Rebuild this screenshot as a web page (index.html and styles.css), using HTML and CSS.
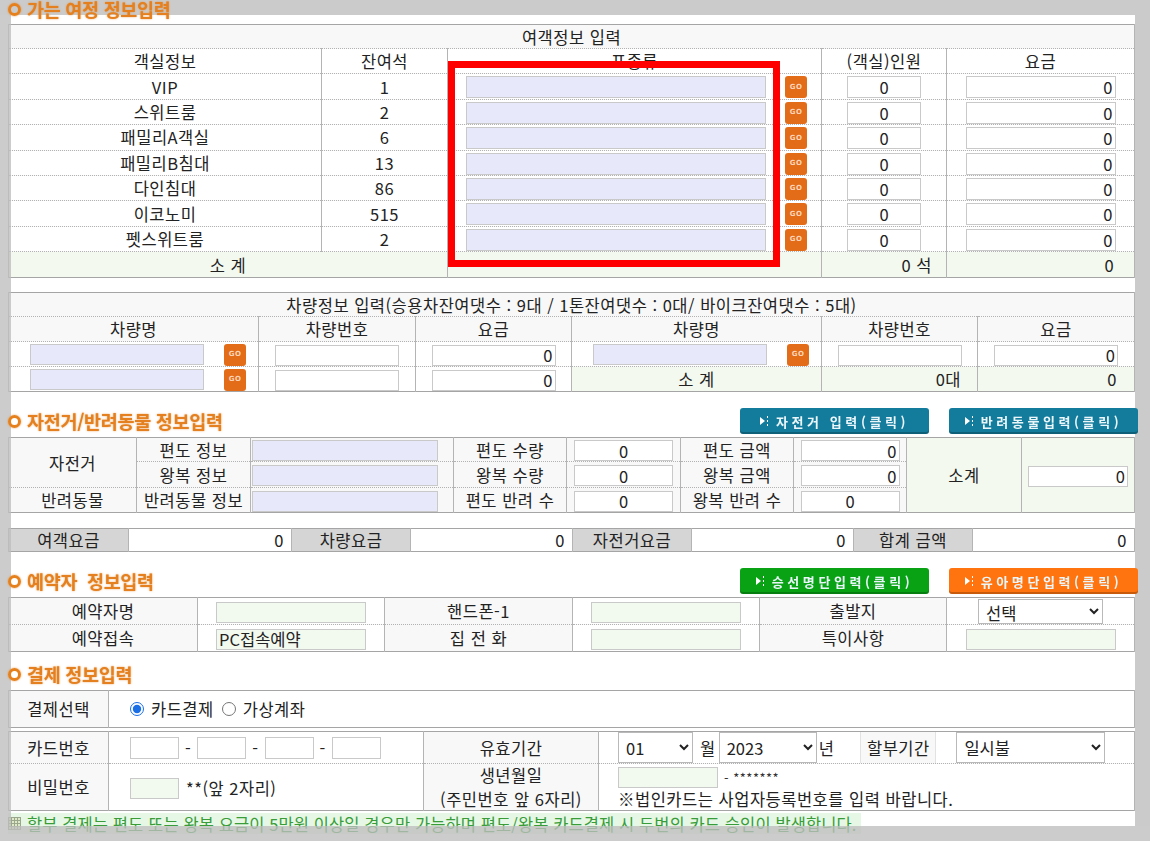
FILE: index.html
```html
<!DOCTYPE html>
<html lang="ko">
<head>
<meta charset="utf-8">
<title>여정 정보입력</title>
<link rel="stylesheet" href="styles.css">
</head>
<body>
<div class="frame frame-top"></div>
<div class="frame frame-left"></div>
<div class="frame frame-right"></div>
<div class="frame frame-bottom"></div>

<main class="page">
  <div class="sec-head first">
    <h2 class="sec-title"><span class="ring"></span>가는 여정 정보입력</h2>
  </div>
  <div class="t1wrap">
    <table class="grid t1">
      <colgroup><col class="c313"><col class="c126"><col class="c374"><col class="c125"><col class="c188"></colgroup>
      <tr class="hd"><td colspan="5">여객정보 입력</td></tr>
      <tr class="ch"><td>객실정보</td><td>잔여석</td><td>표종류</td><td>(객실)인원</td><td>요금</td></tr>
      <tr><td>VIP</td><td>1</td><td class="tk"><input class="inp lav w300"><span class="go">GO</span></td><td><input class="inp c w74" value="0"></td><td><input class="inp r w150" value="0"></td></tr>
      <tr><td>스위트룸</td><td>2</td><td class="tk"><input class="inp lav w300"><span class="go">GO</span></td><td><input class="inp c w74" value="0"></td><td><input class="inp r w150" value="0"></td></tr>
      <tr><td>패밀리A객실</td><td>6</td><td class="tk"><input class="inp lav w300"><span class="go">GO</span></td><td><input class="inp c w74" value="0"></td><td><input class="inp r w150" value="0"></td></tr>
      <tr><td>패밀리B침대</td><td>13</td><td class="tk"><input class="inp lav w300"><span class="go">GO</span></td><td><input class="inp c w74" value="0"></td><td><input class="inp r w150" value="0"></td></tr>
      <tr><td>다인침대</td><td>86</td><td class="tk"><input class="inp lav w300"><span class="go">GO</span></td><td><input class="inp c w74" value="0"></td><td><input class="inp r w150" value="0"></td></tr>
      <tr><td>이코노미</td><td>515</td><td class="tk"><input class="inp lav w300"><span class="go">GO</span></td><td><input class="inp c w74" value="0"></td><td><input class="inp r w150" value="0"></td></tr>
      <tr><td>펫스위트룸</td><td>2</td><td class="tk"><input class="inp lav w300"><span class="go">GO</span></td><td><input class="inp c w74" value="0"></td><td><input class="inp r w150" value="0"></td></tr>
      <tr class="sum"><td colspan="2">소 계</td><td></td><td class="tr pr14">0 석</td><td class="tr pr20">0</td></tr>
    </table>
    <div class="redbox"></div>
  </div>

  <table class="grid t2">
    <colgroup><col class="c250"><col class="c157"><col class="c156"><col class="c250"><col class="c156"><col class="c157"></colgroup>
    <tr class="hd h24"><td colspan="6">차량정보 입력(승용차잔여댓수 : 9대 / 1톤잔여댓수 : 0대/ 바이크잔여댓수 : 5대)</td></tr>
    <tr class="hd h25"><td>차량명</td><td>차량번호</td><td>요금</td><td>차량명</td><td>차량번호</td><td>요금</td></tr>
    <tr class="h25"><td class="car"><input class="inp lav w174"><span class="go">GO</span></td><td><input class="inp w124"></td><td><input class="inp r w124" value="0"></td><td class="car"><input class="inp lav w174"><span class="go">GO</span></td><td><input class="inp w124"></td><td><input class="inp r w124" value="0"></td></tr>
    <tr class="h25"><td class="car"><input class="inp lav w174"><span class="go">GO</span></td><td><input class="inp w124"></td><td><input class="inp r w124" value="0"></td><td class="sumc">소 계</td><td class="sumc tr pr16">0대</td><td class="sumc tr pr17">0</td></tr>
  </table>

  <div class="sec-head">
    <h2 class="sec-title"><span class="ring"></span>자전거/반려동물 정보입력</h2>
    <div class="btns">
      <a class="btn blue"><svg class="play" width="10" height="10" viewBox="0 0 10 10"><path d="M0 1 L5 5 L0 9 Z" fill="#fff"/><rect x="7" y="0" width="1" height="2" fill="#fff"/><rect x="7" y="4" width="1" height="2" fill="#fff"/><rect x="7" y="8" width="1" height="2" fill="#fff"/></svg>자전거 입력(클릭)</a>
      <a class="btn blue"><svg class="play" width="10" height="10" viewBox="0 0 10 10"><path d="M0 1 L5 5 L0 9 Z" fill="#fff"/><rect x="7" y="0" width="1" height="2" fill="#fff"/><rect x="7" y="4" width="1" height="2" fill="#fff"/><rect x="7" y="8" width="1" height="2" fill="#fff"/></svg>반려동물입력(클릭)</a>
    </div>
  </div>
  <table class="grid t3">
    <colgroup><col class="c128"><col class="c114"><col class="c203"><col class="c113"><col class="c114"><col class="c113"><col class="c113"><col class="c115"><col class="c113"></colgroup>
    <tr class="h24"><td rowspan="2">자전거</td><td>편도 정보</td><td class="tl"><input class="inp lav w186"></td><td>편도 수량</td><td><input class="inp c w99" value="0"></td><td>편도 금액</td><td><input class="inp r w99" value="0"></td><td rowspan="3" class="sumc">소계</td><td rowspan="3" class="sumc"><input class="inp r w100" value="0"></td></tr>
    <tr class="h26"><td>왕복 정보</td><td class="tl"><input class="inp lav w186"></td><td>왕복 수량</td><td><input class="inp c w99" value="0"></td><td>왕복 금액</td><td><input class="inp r w99" value="0"></td></tr>
    <tr class="h25"><td>반려동물</td><td>반려동물 정보</td><td class="tl"><input class="inp lav w186"></td><td>편도 반려 수</td><td><input class="inp c w99" value="0"></td><td>왕복 반려 수</td><td><input class="inp c w99" value="0"></td></tr>
  </table>

  <table class="grid t4">
    <colgroup><col class="c120"><col class="c163"><col class="c119"><col class="c162"><col class="c119"><col class="c162"><col class="c119"><col class="c162"></colgroup>
    <tr class="h23"><td class="lbl">여객요금</td><td class="val">0</td><td class="lbl">차량요금</td><td class="val">0</td><td class="lbl">자전거요금</td><td class="val">0</td><td class="lbl">합계 금액</td><td class="val">0</td></tr>
  </table>

  <div class="sec-head">
    <h2 class="sec-title"><span class="ring"></span>예약자&nbsp; 정보입력</h2>
    <div class="btns">
      <a class="btn green"><svg class="play" width="10" height="10" viewBox="0 0 10 10"><path d="M0 1 L5 5 L0 9 Z" fill="#fff"/><rect x="7" y="0" width="1" height="2" fill="#fff"/><rect x="7" y="4" width="1" height="2" fill="#fff"/><rect x="7" y="8" width="1" height="2" fill="#fff"/></svg>승선명단입력(클릭)</a>
      <a class="btn orange"><svg class="play" width="10" height="10" viewBox="0 0 10 10"><path d="M0 1 L5 5 L0 9 Z" fill="#fff"/><rect x="7" y="0" width="1" height="2" fill="#fff"/><rect x="7" y="4" width="1" height="2" fill="#fff"/><rect x="7" y="8" width="1" height="2" fill="#fff"/></svg>유아명단입력(클릭)</a>
    </div>
  </div>
  <table class="grid t5">
    <colgroup><col class="c189"><col class="c187"><col class="c188"><col class="c187"><col class="c187"><col class="c188"></colgroup>
    <tr class="h27"><td>예약자명</td><td class="wh"><input class="inp grn w150"></td><td>핸드폰-1</td><td class="wh"><input class="inp grn w150"></td><td>출발지</td><td class="wh"><select class="sel s125"><option>선택</option></select></td></tr>
    <tr class="h27"><td>예약접속</td><td class="wh"><input class="inp grn w150" value="PC접속예약"></td><td>집 전 화</td><td class="wh"><input class="inp grn w150"></td><td>특이사항</td><td class="wh"><input class="inp grn w150"></td></tr>
  </table>

  <div class="sec-head">
    <h2 class="sec-title"><span class="ring"></span>결제 정보입력</h2>
  </div>
  <table class="grid t6">
    <colgroup><col class="c100"><col class="c1026"></colgroup>
    <tr class="h37"><td>결제선택</td><td class="wh tl pl21"><label class="radio"><input type="radio" name="pay" checked>카드결제</label><label class="radio"><input type="radio" name="pay">가상계좌</label></td></tr>
  </table>
  <table class="grid t7">
    <colgroup><col class="c100"><col class="c315"><col class="c175"><col class="c536"></colgroup>
    <tr class="h32"><td>카드번호</td><td class="wh tl pl21"><span class="cardnum"><input class="inp w49"><span>-</span><input class="inp w49"><span>-</span><input class="inp w49"><span>-</span><input class="inp w49"></span></td><td>유효기간</td><td class="wh tl pl19"><span class="exp"><select class="sel s75"><option>01</option></select><span class="unit u1">월</span><select class="sel s98"><option>2023</option></select><span class="unit u2">년</span><span class="inst">할부기간</span><select class="sel s149"><option>일시불</option></select></span></td></tr>
    <tr class="h46"><td>비밀번호</td><td class="wh tl pl21"><input class="inp grn w49"><span class="pwhint">**(앞 2자리)</span></td><td class="two"><div class="twol">생년월일<br>(주민번호 앞 6자리)</div></td><td class="wh tl pl19 birth"><div class="bline"><input class="inp grn w100"><span class="mask">- *******</span></div><div class="bnote">※법인카드는 사업자등록번호를 입력 바랍니다.</div></td></tr>
  </table>
  <div class="note"><svg class="grid-ic" width="13" height="13" viewBox="0 0 13 13"><rect x="0.5" y="0.5" width="12" height="12" fill="#dfe8c8" stroke="#9aa78a"/><path d="M0 3.5H13M0 6.5H13M0 9.5H13M3.5 0V13M6.5 0V13M9.5 0V13" stroke="#9aa78a" stroke-width="1"/></svg>할부 결제는 편도 또는 왕복 요금이 5만원 이상일 경우만 가능하며 편도/왕복 카드결제 시 두번의 카드 승인이 발생합니다.</div>
</main>
</body>
</html>
```

FILE: styles.css
```css
* { box-sizing: border-box; }
html, body { margin: 0; padding: 0; }
body {
  background: #fff;
  font-family: "Noto Sans CJK KR", "Malgun Gothic", sans-serif;
  font-size: 16.5px;
  letter-spacing: 0.5px;
  color: #222;
  overflow: hidden;
}

/* grey frame around the viewport */
.frame { position: fixed; z-index: 3; pointer-events: none; background: rgba(190,190,190,.78); }
.frame-top { left: 0; top: 0; width: 1150px; height: 15px; background: #cbcbcb; z-index: 1; }
.frame-left { left: 0; top: 15px; width: 11px; height: 811px; }
.frame-right { left: 1135px; top: 15px; width: 15px; height: 811px; background: #cbcbcb; }
.frame-bottom { left: 0; top: 826px; width: 1150px; height: 15px; }

.page { width: 1126px; margin-left: 8px; }

/* section headers */
.sec-head {
  position: relative; z-index: 4;
  display: flex; align-items: center; justify-content: space-between;
  height: 26px; margin-bottom: 3px; margin-right: -4px;
}
.sec-head.first { height: 21px; padding-top: 1px; align-items: flex-start; margin-right: 0; }
.sec-head.first .sec-title { line-height: 16px; }
.t2 { margin-top: 14px; }
.t2 + .sec-head { margin-top: 16px; }
.t4 { margin-top: 15px; }
.t4 + .sec-head { margin-top: 16px; }
.t5 + .sec-head { margin-top: 9px; }
.t7 { margin-top: 3px; }

.sec-title {
  margin: 0; display: flex; align-items: center; gap: 6px;
  font-size: 18.5px; font-weight: bold; line-height: 17px; letter-spacing: -0.3px;
  color: #e4801f; text-shadow: 0 0 2px rgba(228,128,31,.7);
}
.ring {
  width: 13px; height: 13px; border-radius: 50%;
  border: 3px solid #e5801c; box-shadow: 0 0 2px rgba(229,128,28,.8);
}

.btns { display: flex; gap: 20px; }
.btn {
  display: inline-flex; align-items: center; justify-content: center; gap: 6px;
  width: 189px; height: 26px; border-radius: 3px;
  font-size: 13px; font-weight: bold; letter-spacing: 3.6px; color: #eaf6fa;
  box-shadow: inset 0 -2px 0 rgba(0,0,0,.22);
}
.btn.blue { background: #137b9c; }
.btn.green { background: #0aa215; }
.btn.orange { background: #ff740f; }
.play { flex: none; }

/* tables */
.grid {
  width: 1126px; border-collapse: collapse; table-layout: fixed;
  border: 1px solid #a5a5a5; background: #f8f8f8;
}
.grid td {
  border-left: 1px solid #b4b4b4; border-right: 1px solid #b4b4b4;
  border-top: 1px dotted #b2b2b2; border-bottom: 1px dotted #b2b2b2;
  padding: 0; height: 25px; text-align: center; vertical-align: middle;
  line-height: 20px; white-space: nowrap; overflow: hidden;
}
.t1 td { background: #fff; height: 25.4px; }
.t1 .hd td { background: #f8f8f8; height: 24px; }
.t2 td { background: #fff; }
.t2 .hd td { background: #f8f8f8; }
.grid .sum td, .grid td.sumc { background: #f3f9ef; }
.t1 .sum td { height: 26px; }

.grid .h23 td { height: 23px; }
.grid .h24 td { height: 24px; }
.grid .h25 td { height: 25px; }
.grid .h26 td { height: 26px; }
.grid .h27 td { height: 27px; }
.grid .h28 td { height: 28px; }
.grid .h32 td { height: 32px; }
.grid .h37 td { height: 37px; }
.grid .h46 td { height: 46px; }

.t4 td.lbl { background: #d5d5d5; }
.t4 td.val { background: #fff; text-align: right; padding-right: 7px; }
.grid td.wh { background: #fff; }

.c313{width:313px}.c126{width:126px}.c374{width:374px}.c125{width:125px}.c188{width:188px}
.c250{width:250px}.c157{width:157px}.c156{width:156px}
.c128{width:128px}.c114{width:114px}.c203{width:203px}.c113{width:113px}.c115{width:115px}
.c120{width:120px}.c163{width:163px}.c119{width:119px}.c162{width:162px}
.c189{width:189px}.c187{width:187px}
.c100{width:100px}.c1026{width:1026px}.c315{width:315px}.c175{width:175px}.c536{width:536px}

.tr { text-align: right !important; }
.tl { text-align: left !important; }
.pr14 { padding-right: 14px !important; }
.pr16 { padding-right: 16px !important; }
.pr17 { padding-right: 17px !important; }
.pr20 { padding-right: 20px !important; }
.pl21 { padding-left: 21px !important; }
.pl19 { padding-left: 19px !important; }
.grid td.tk { text-align: left; padding-left: 18px; }
.grid td.car { text-align: left; padding-left: 21px; }
.grid td.tl { padding-left: 1px; }

/* inputs */
.inp {
  font: inherit; letter-spacing: 0; color: #222; height: 21px; padding: 0 2px; margin: 0;
  border: 1px solid #c9c9c9; background: #fff; vertical-align: middle; border-radius: 0;
  outline: none;
}
.t1 .inp { height: 22px; }
.inp.lav { background: #e8e8fb; }
.inp.grn { background: #f2f9ef; }
.inp.c { text-align: center; }
.inp.r { text-align: right; }
.w300{width:300px}.w74{width:74px}.w150{width:150px}.w174{width:174px}.w124{width:124px}
.w186{width:186px}.w99{width:99px}.w100{width:100px}.w49{width:49px}

.go {
  display: inline-flex; align-items: center; justify-content: center;
  width: 22px; height: 22px; margin-left: 19px; vertical-align: middle;
  background: #e36c19; border-radius: 3px;
  font-family: "DejaVu Sans", sans-serif; font-size: 7px; font-weight: bold;
  color: #fcd6ba; letter-spacing: 0.3px; line-height: 1;
}
.car .go { margin-left: 20px; }

.redbox {
  position: absolute; left: 440px; top: 37px; width: 332px; height: 206px;
  border: 7px solid #ff0000;
}
.t1wrap { position: relative; }

/* selects */
.sel {
  font: inherit; letter-spacing: 0; color: #222; background: #fff; border: 1px solid #b9b9b9;
  border-radius: 0; height: 31px; padding: 0 3px; margin: 0; vertical-align: middle;
}
.s125 { width: 125px; height: 25px; }
.s75 { width: 75px; }
.s98 { width: 98px; }
.s149 { width: 149px; }

.radio { display: inline-flex; align-items: center; margin-right: 8px; }
.radio input { width: 14px; height: 14px; margin: 0 7px 0 0; accent-color: #1a6fe6; }

.cardnum { display: inline-flex; align-items: center; gap: 6px; vertical-align: middle; }
.cardnum .inp { height: 22px; }
.exp { display: flex; align-items: center; height: 31px; }
.unit.u1 { margin: 0 3px 0 7px; }
.unit.u2 { margin: 0 0 0 2px; }
.inst {
  display: flex; align-items: center; justify-content: center;
  width: 76px; height: 31px; margin-left: 26px; margin-right: 20px;
  background: #f8f8f8; border-left: 1px solid #e2e2e2; border-right: 1px solid #e2e2e2;
}
.pwhint { margin-left: 7px; vertical-align: middle; }
.twol { line-height: 24px; margin: -1px 0; }
.birth { vertical-align: top !important; }
.bline { display: flex; align-items: center; height: 24px; padding-top: 3px; }
.mask { font-size: 13px; margin-left: 6px; color: #333; }
.bnote { line-height: 22px; }

.note {
  position: relative; z-index: 2;
  display: inline-flex; align-items: center; gap: 6px; margin-top: 1px;
  height: 21px; padding-right: 4px; background: #e6f7e6; color: #389c38; white-space: nowrap;
  letter-spacing: 0.1px;
}
.grid-ic { flex: none; }
```
